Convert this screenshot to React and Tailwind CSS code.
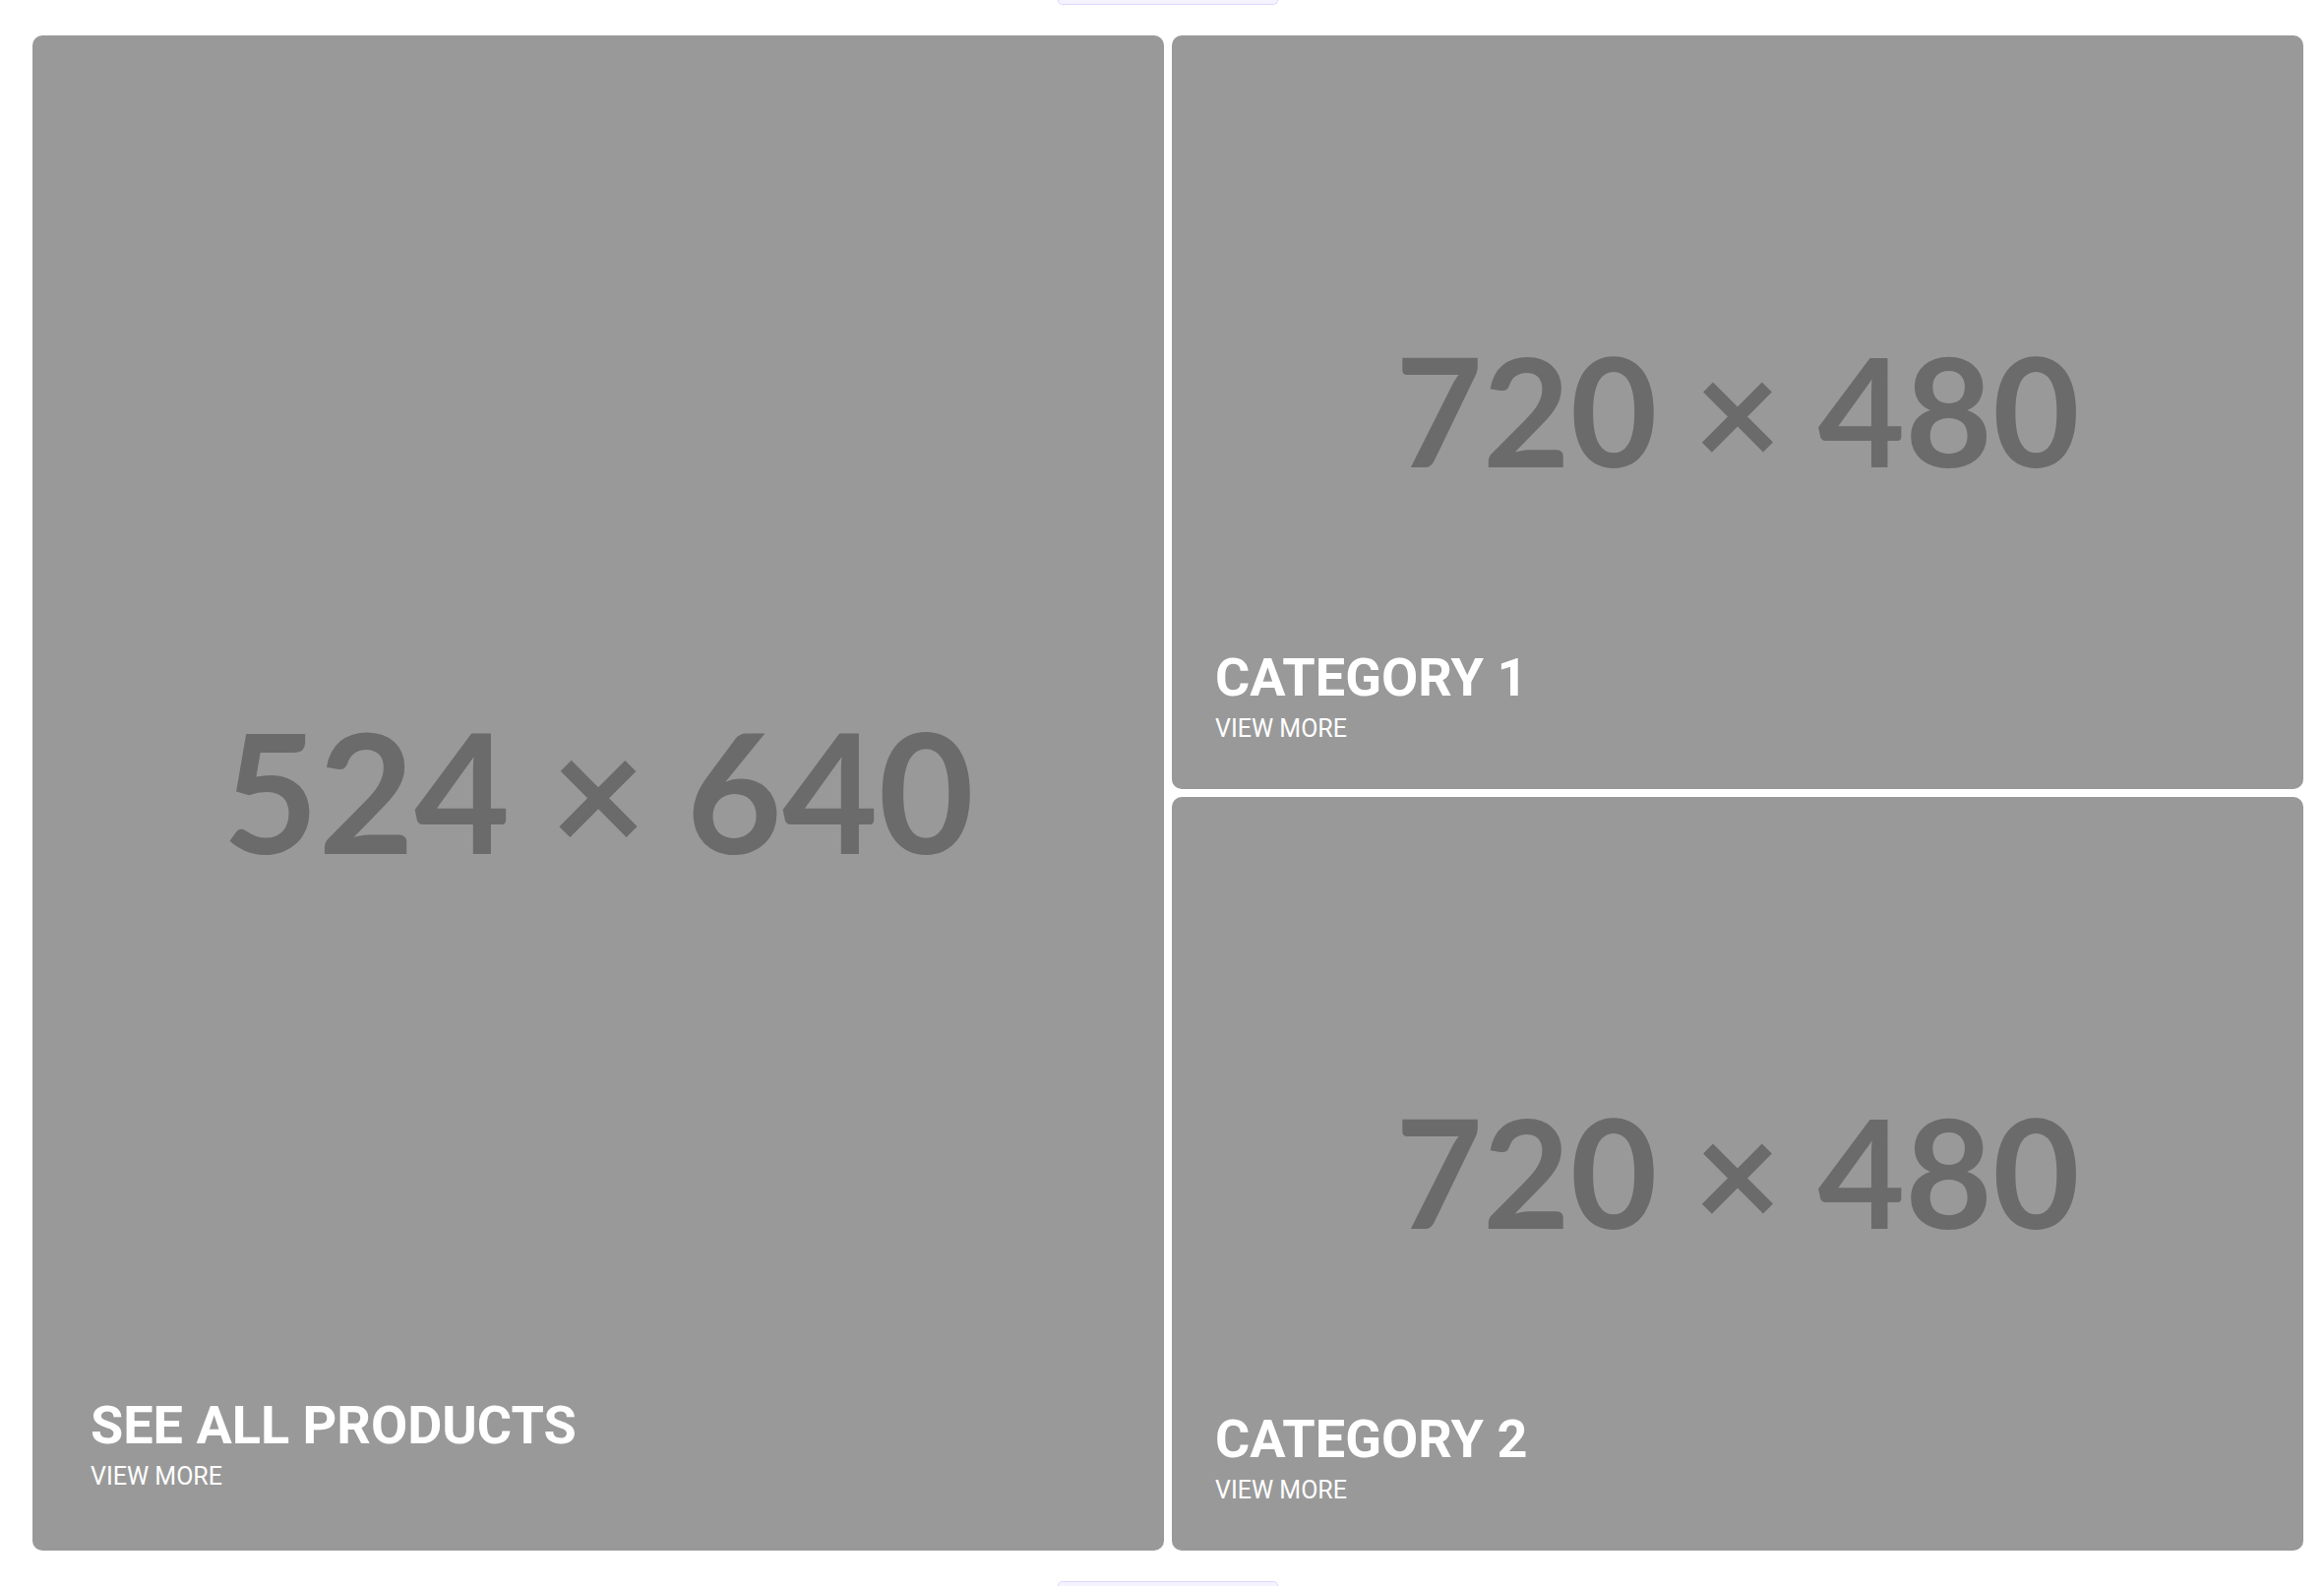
import React from "react";

const tiles = {
  main: { size: "524 × 640", title: "SEE ALL PRODUCTS" },
  side: [
    { size: "720 × 480", title: "CATEGORY 1" },
    { size: "720 × 480", title: "CATEGORY 2" },
  ],
};

function Placeholder({ text, big }) {
  return (
    <div className="absolute inset-0 flex items-center justify-center bg-[#999999] pb-[6px]">
      <span
        className={
          "font-['Lato',sans-serif] font-bold leading-none text-[#6b6b6b] " +
          (big ? "text-[168px]" : "text-[153px]")
        }
      >
        {text}
      </span>
    </div>
  );
}

function Caption({ title, wide }) {
  return (
    <div
      className={
        "absolute bottom-0 left-0 font-['Roboto',sans-serif] text-white " +
        (wide ? "pl-[59px] pb-[61px]" : "pl-[44px] pb-[47px]")
      }
    >
      <h3 className="text-[54px] font-bold leading-[60px]">{title}</h3>
      <a href="#" className="mt-[8px] block text-[25px] leading-[28px]">
        VIEW MORE
      </a>
    </div>
  );
}

export default function App() {
  return (
    <div className="h-[1612px] w-[2362px] overflow-hidden bg-white pl-[33px] pr-[21px]">
      {/* pager button, cut off at the top */}
      <div className="mx-auto h-[5px] w-[224px] rounded-b-[8px] border border-t-0 border-[#ddd6fe] bg-[#f5f3ff]" />

      <div className="mt-[31px] grid h-[1540px] grid-cols-2 gap-[8px]">
        <div className="relative overflow-hidden rounded-[10px]">
          <Placeholder text={tiles.main.size} big />
          <Caption title={tiles.main.title} wide />
        </div>

        <div className="flex flex-col gap-[8px]">
          {tiles.side.map((t) => (
            <div key={t.title} className="relative flex-1 overflow-hidden rounded-[10px]">
              <Placeholder text={t.size} />
              <Caption title={t.title} />
            </div>
          ))}
        </div>
      </div>

      {/* pager button, cut off at the bottom */}
      <div className="mx-auto mt-[31px] h-[5px] w-[224px] rounded-t-[8px] border border-b-0 border-[#ddd6fe] bg-[#f5f3ff]" />
    </div>
  );
}
